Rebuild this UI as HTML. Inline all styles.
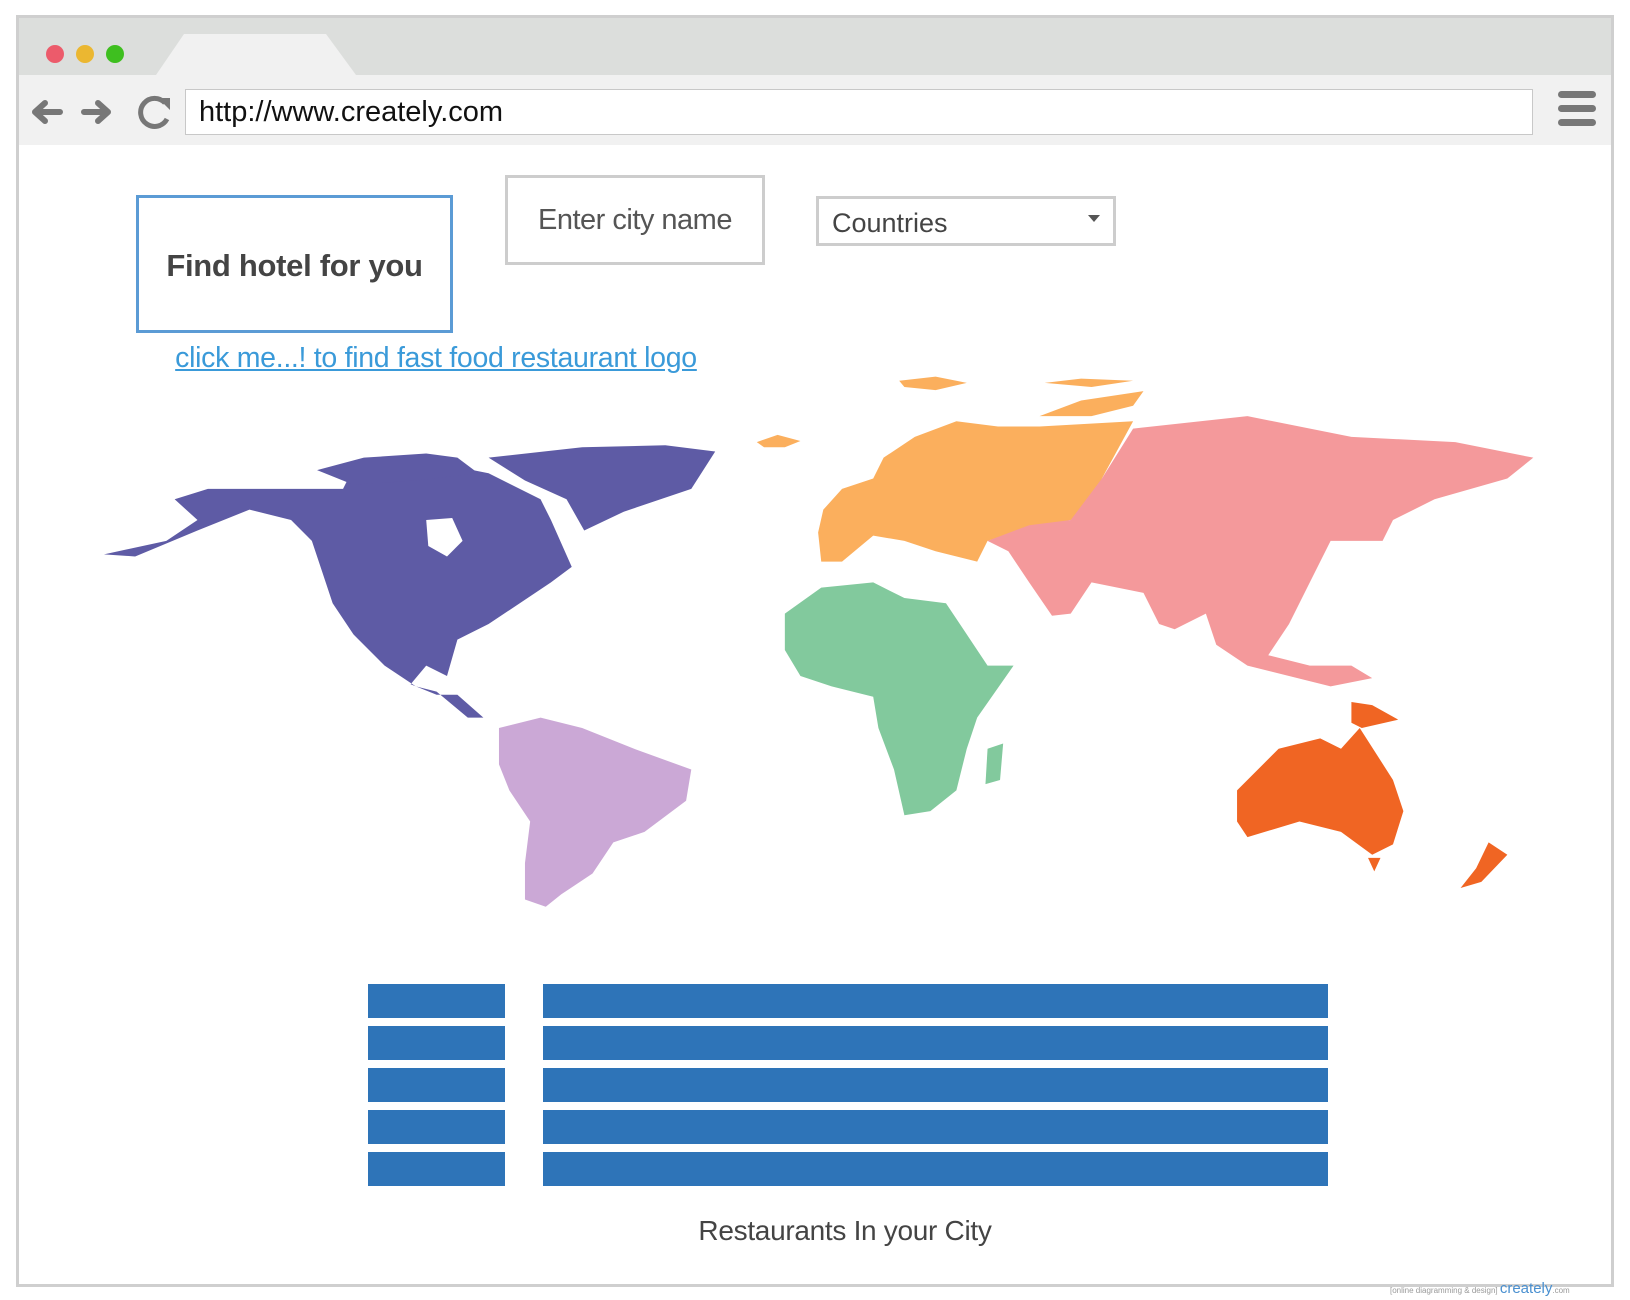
<!DOCTYPE html>
<html><head><meta charset="utf-8"><style>
*{margin:0;padding:0;box-sizing:border-box}
body{width:1630px;height:1300px;background:#fff;position:relative;overflow:hidden;font-family:"Liberation Sans",sans-serif}
.abs{position:absolute}
</style></head><body>
<div class="abs" style="left:16px;top:15px;width:1598px;height:1272px;border:3px solid #cfcfcf;background:#fff"></div>
<div class="abs" style="left:19px;top:18px;width:1592px;height:57px;background:#dcdedc"></div>
<svg class="abs" style="left:0;top:0" width="400" height="80"><polygon points="156,75 184,34 326,34 356,75" fill="#f1f1f1"/>
<circle cx="55" cy="54" r="9" fill="#ec5b6b"/><circle cx="85" cy="54" r="9" fill="#ebb731"/><circle cx="115" cy="54" r="9" fill="#3ebf1f"/></svg>
<div class="abs" style="left:19px;top:75px;width:1592px;height:70px;background:#f1f1f1"></div>
<svg class="abs" style="left:30px;top:95px" width="150" height="40">
<path d="M5 17 L15 8 M5 17 L15 26 M5 17 L30 17" stroke="#777" stroke-width="6" stroke-linecap="round" fill="none"/>
<path d="M78 17 L68 8 M78 17 L68 26 M78 17 L54 17" stroke="#777" stroke-width="6" stroke-linecap="round" fill="none"/>
<path d="M135 8 A14 14 0 1 0 137 24" stroke="#777" stroke-width="5" fill="none"/>
<polygon points="128,3 140,3 140,15" fill="#777"/>
</svg>
<div class="abs" style="left:185px;top:89px;width:1348px;height:46px;background:#fff;border:1px solid #c8c8c8;font-size:29px;line-height:44px;padding-left:13px;color:#111">http://www.creately.com</div>
<div class="abs" style="left:1558px;top:91px;width:38px;height:7px;border-radius:4px;background:#777"></div>
<div class="abs" style="left:1558px;top:105px;width:38px;height:7px;border-radius:4px;background:#777"></div>
<div class="abs" style="left:1558px;top:119px;width:38px;height:7px;border-radius:4px;background:#777"></div>

<div class="abs" style="left:136px;top:195px;width:317px;height:138px;border:3px solid #5b9bd5;font-size:31px;font-weight:bold;color:#444;text-align:center;line-height:136px;letter-spacing:-0.3px">Find hotel for you</div>
<div class="abs" style="left:505px;top:175px;width:260px;height:90px;border:3px solid #cdcdcd;font-size:29px;color:#555;text-align:center;line-height:84px;letter-spacing:-0.5px">Enter city name</div>
<div class="abs" style="left:816px;top:196px;width:300px;height:50px;border:3px solid #cdcdcd;font-size:27px;color:#444;line-height:48px;padding-left:13px">Countries</div>
<svg class="abs" style="left:1088px;top:214px" width="14" height="10"><polygon points="0,1 12,1 6,8" fill="#555"/></svg>
<div class="abs" style="left:173px;top:342px;width:526px;font-size:28.5px;color:#3a9ad9;text-decoration:underline;white-space:nowrap;letter-spacing:-0.3px;text-align:center">click me...! to find fast food restaurant logo</div>

<svg class="abs" style="left:0;top:0" width="1630" height="1300" viewBox="0 0 1568 1250">
<g fill="#5e5ba5">
<polygon points="100,533 160,520 190,500 168,480 200,470 260,470 330,470 340,450 420,445 470,455 520,480 530,500 550,545 530,560 500,580 470,600 440,615 430,650 410,640 395,658 420,668 440,668 465,690 450,690 420,665 400,660 370,640 340,610 320,580 310,550 300,520 280,500 240,490 190,510 130,535"/>
<polygon points="470,440 560,430 640,428 688,434 665,470 600,492 562,510 545,480 505,462"/>
<polygon points="305,452 350,440 410,436 440,440 460,455 400,462 340,466"/>
</g>
<polygon fill="#fff" points="410,500 435,498 445,520 430,535 412,525"/>
<polygon fill="#cba8d6" points="480,700 520,690 560,700 610,720 665,740 660,770 620,800 590,810 570,840 540,860 525,872 505,865 505,830 510,790 490,760 480,735"/>
<g fill="#fbaf5d">
<polygon points="787,512 792,490 810,470 840,460 850,440 880,420 920,405 960,410 1000,410 1090,405 1060,460 1050,490 1030,500 980,510 950,520 940,540 900,530 870,520 840,515 810,540 790,540"/>
<polygon points="728,425 748,418 770,424 755,430 735,430"/>
<polygon points="1000,400 1040,385 1100,376 1090,390 1050,400"/>
<polygon points="865,366 900,362 930,368 900,375 870,372"/>
<polygon points="1005,368 1040,364 1090,366 1050,372"/>
</g>
<g fill="#f4999b">
<polygon points="1090,412 1200,400 1300,420 1400,425 1475,440 1450,460 1380,480 1340,500 1330,520 1280,520 1260,560 1240,600 1220,630 1260,640 1300,640 1320,652 1280,660 1200,640 1170,620 1160,590 1130,605 1115,600 1100,570 1050,560 1030,590 1012,592 990,560 970,530 950,520 990,505 1030,500 1060,460"/>
</g>
<g fill="#82c99d">
<polygon points="755,590 790,565 840,560 870,575 910,580 930,610 950,640 975,640 940,690 930,720 920,760 895,780 870,784 860,740 845,700 840,670 800,660 770,650 755,625"/>
<polygon points="950,720 965,715 962,750 948,754"/>
</g>
<g fill="#f06523">
<polygon points="1190,760 1230,720 1270,710 1290,720 1308,700 1340,750 1350,780 1340,812 1320,822 1290,800 1250,790 1200,805 1190,790"/>
<polygon points="1300,675 1320,678 1345,692 1310,700 1300,695"/>
<polygon points="1432,810 1450,822 1425,848 1405,854 1420,835"/>
<polygon points="1316,825 1328,825 1322,838"/>
</g>
</svg>

<div class="abs" style="left:368px;top:984px;width:137px;height:34px;background:#2e74b8"></div>
<div class="abs" style="left:543px;top:984px;width:785px;height:34px;background:#2e74b8"></div>
<div class="abs" style="left:368px;top:1026px;width:137px;height:34px;background:#2e74b8"></div>
<div class="abs" style="left:543px;top:1026px;width:785px;height:34px;background:#2e74b8"></div>
<div class="abs" style="left:368px;top:1068px;width:137px;height:34px;background:#2e74b8"></div>
<div class="abs" style="left:543px;top:1068px;width:785px;height:34px;background:#2e74b8"></div>
<div class="abs" style="left:368px;top:1110px;width:137px;height:34px;background:#2e74b8"></div>
<div class="abs" style="left:543px;top:1110px;width:785px;height:34px;background:#2e74b8"></div>
<div class="abs" style="left:368px;top:1152px;width:137px;height:34px;background:#2e74b8"></div>
<div class="abs" style="left:543px;top:1152px;width:785px;height:34px;background:#2e74b8"></div>
<div class="abs" style="left:595px;top:1215px;width:500px;text-align:center;font-size:28px;color:#444;letter-spacing:-0.3px">Restaurants In your City</div>
<div class="abs" style="left:1390px;top:1280px;font-size:8px;color:#999;white-space:nowrap">[online diagramming &amp; design] <span style="font-size:15px;color:#4a90d0">creately</span>.com</div>
</body></html>
